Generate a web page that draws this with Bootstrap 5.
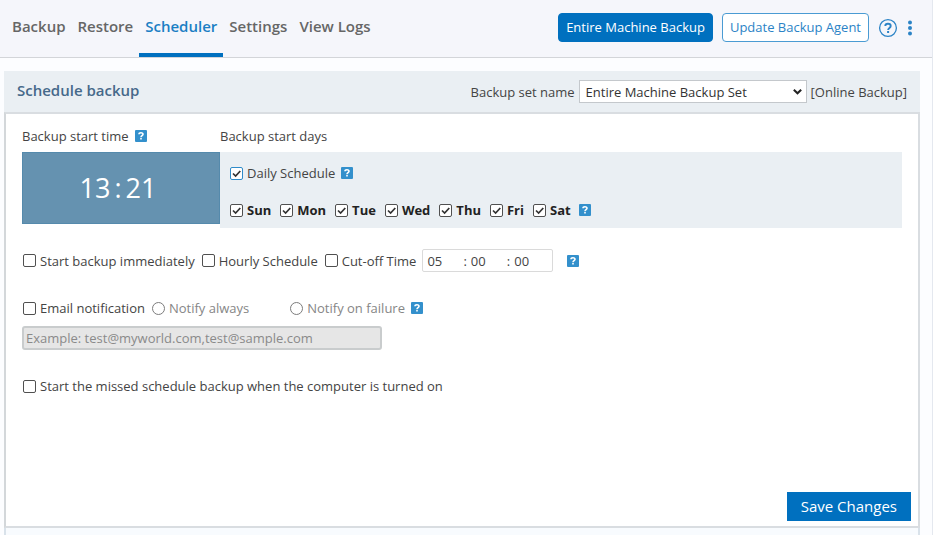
<!DOCTYPE html>
<html lang="en">
<head>
<meta charset="utf-8">
<meta name="viewport" content="width=device-width, initial-scale=1">
<title>Schedule backup</title>
<link href="https://cdn.jsdelivr.net/npm/bootstrap@5.3.0/dist/css/bootstrap.min.css" rel="stylesheet">
<style>
body{font-family:"Open Sans","Noto Sans",sans-serif;font-size:13px;line-height:20px;color:#444;background:#fcfdff}
.page{border-right:1px solid #e4e8ef}
.topbar{height:58px;background:#f5f6fb;border-bottom:1px solid #d3d5d9}
.tabs{margin-left:6px}
.tabs .nav-link{padding:16px 6px 0;height:57px;font-size:15px;font-weight:600;color:#666;border-bottom:4px solid transparent}
.tabs .nav-link.active{color:#1b7fc4;border-color:#0070bf}
.actions{gap:9px;padding:0 19px 2px 0}
.top-btn{height:29px;padding:0 7px;font-size:13px;line-height:27px;border-radius:4px}
.btn-blue{background:#0070bf;border-color:#0070bf;color:#fff}
.btn-line{background:#fff;border-color:#4a9bd3;color:#2b83c6}
.btn-line:hover,.btn-blue:hover{background:#005f9f;color:#fff}
.icon-btn{color:#2b83c6}
.panel{margin:13px 12px 0 4px}
.panel-head{height:41px;background:#eaeff3;padding:0 13px}
.panel-head h1{font-size:15px;line-height:20px;font-weight:600;color:#46698a}
.set-select{width:228px;height:23px;padding:0 20px 0 6px;font-size:13px;line-height:20px;border:1px solid #c4c8cc;border-radius:0;color:#333;background-position:right 3px center;background-size:11px 11px;
background-image:url("data:image/svg+xml,%3csvg xmlns='http://www.w3.org/2000/svg' viewBox='0 0 12 12'%3e%3cpath fill='none' stroke='%23222' stroke-width='2.2' d='M2 4l4 4 4-4'/%3e%3c/svg%3e")}
.panel-body{min-height:416px;background:#fff;border:2px solid #d9dde1;border-left-color:#d3d7da;padding:12px 7px 5px 16px}
.panel-foot{height:7px;margin:0 12px 0 4px;border:solid #d9e2ea;border-width:0 2px;background:#f8fbfe}
.start{margin-right:9px}
.caption{gap:6px;margin-bottom:6px}
.time-col{width:198px}
.clock{height:72px;background:#6592b0;border:1px solid #558aac;color:#fff;font-size:27px;line-height:34px;padding-right:6px}
.days{height:76px;background:#eaeff3;padding:11px 9px 0}
.daily{gap:6px}
.opt{display:flex;align-items:center;gap:4px}
.opt label{cursor:pointer}
.opt .form-check-input{width:13px;height:13px;margin:0 0 0 1px;border:1px solid #505050;border-radius:2px;background-color:#fff;background-size:13px 13px;flex:none}
.opt .form-check-input[type=radio]{border-radius:50%;border-color:#7c7c7c}
.opt .form-check-input:checked{background-image:url("data:image/svg+xml,%3csvg xmlns='http://www.w3.org/2000/svg' viewBox='0 0 13 13'%3e%3cpath fill='none' stroke='%23333' stroke-width='1.7' d='M3 6.5l2.6 2.6L10.3 4'/%3e%3c/svg%3e")}
.opt.lit .form-check-input{border-color:#2f8bc9}
.week{color:#222;font-weight:700;gap:8px;margin-top:17px}
.muted{color:#868686}
.help{width:12px;height:12px;padding:0;border:0;background:#3390cc;display:block;flex:none;border-radius:1px}
.help svg,.icon-btn svg{display:block}
.now-row{gap:6px;margin-top:21px}
.mail-row{gap:6px;margin-top:26px}
.always{margin-right:34px}
.cutoff{width:131px;height:23px;border:1px solid #dadada;border-radius:2px;padding:0 4px}
.cutoff input{width:36px;border:0;padding:0;background:none;color:#444;line-height:20px}
.mail{width:360px;max-width:100%;height:24px;padding:0 2px;font-size:13px;border:2px solid #c9cccd;border-radius:3px}
.mail:disabled{background:#e6e6e6}
.mail::placeholder{color:#8a8a8a}
.missed{margin-top:26px}
.save{height:29px;padding:0 13px;border-radius:0;font-size:15px;line-height:27px}
</style>
<script src="https://cdn.jsdelivr.net/npm/bootstrap@5.3.0/dist/js/bootstrap.bundle.min.js"></script>
</head>
<body>
<svg class="d-none" aria-hidden="true">
<symbol id="q" viewBox="0 0 12 12"><path fill="none" stroke="#fff" stroke-width="1.6" d="M4 4.3C4 2.2 8 2.2 8 4.2 8 5.6 6 5.5 6 7.2"/><path fill="#fff" d="M5.2 8.1h1.6v1.5H5.2z"/></symbol>
</svg>
<div class="page">
<header class="topbar d-flex justify-content-between">
  <nav class="nav tabs flex-nowrap" aria-label="Main">
    <a class="nav-link" href="#">Backup</a>
    <a class="nav-link" href="#">Restore</a>
    <a class="nav-link active" aria-current="page" href="#">Scheduler</a>
    <a class="nav-link" href="#">Settings</a>
    <a class="nav-link" href="#">View Logs</a>
  </nav>
  <div class="actions d-flex align-items-center">
    <button type="button" class="btn btn-blue top-btn">Entire Machine Backup</button>
    <button type="button" class="btn btn-line top-btn">Update Backup Agent</button>
    <button type="button" class="btn icon-btn border-0 p-0" aria-label="Help"><svg width="20" height="20" viewBox="0 0 20 20" fill="none" stroke="currentColor"><circle cx="10" cy="10" r="8.4" stroke-width="1.3"/><path stroke-width="1.9" d="M7.3 8C7.3 4.9 12.7 5 12.7 7.9c0 2-2.6 2-2.6 4.1"/><path stroke-width="2" d="M10.1 13v2"/></svg></button>
    <button type="button" class="btn icon-btn border-0 p-0" aria-label="More"><svg width="6" height="16" viewBox="0 0 6 16" fill="currentColor"><circle cx="3" cy="2.5" r="2"/><circle cx="3" cy="8" r="2"/><circle cx="3" cy="13.5" r="2"/></svg></button>
  </div>
</header>
<main>
<form class="panel">
  <div class="panel-head d-flex align-items-center justify-content-between">
    <h1 class="mb-0 pb-1">Schedule backup</h1>
    <div class="d-flex align-items-center gap-1">
      <label for="set">Backup set name</label>
      <select id="set" class="form-select set-select"><option>Entire Machine Backup Set</option></select>
      <span>[Online Backup]</span>
    </div>
  </div>
  <div class="panel-body d-flex flex-column">
    <div class="start d-flex">
      <div class="time-col flex-shrink-0">
        <div class="caption d-flex align-items-center"><span>Backup start time</span><button type="button" class="help" aria-label="Help on start time"><svg width="12" height="12"><use href="#q"/></svg></button></div>
        <div class="clock d-flex align-items-center justify-content-center gap-1"><span>13</span><span>:</span><span>21</span></div>
      </div>
      <div class="flex-grow-1">
        <div class="caption">Backup start days</div>
        <div class="days">
          <div class="daily d-flex align-items-center">
            <div class="opt lit"><input class="form-check-input" type="checkbox" id="daily" checked><label for="daily">Daily Schedule</label></div>
            <button type="button" class="help" aria-label="Help on daily schedule"><svg width="12" height="12"><use href="#q"/></svg></button>
          </div>
          <div class="week d-flex align-items-center">
            <div class="opt"><input class="form-check-input" type="checkbox" id="sun" checked><label for="sun">Sun</label></div>
            <div class="opt"><input class="form-check-input" type="checkbox" id="mon" checked><label for="mon">Mon</label></div>
            <div class="opt"><input class="form-check-input" type="checkbox" id="tue" checked><label for="tue">Tue</label></div>
            <div class="opt"><input class="form-check-input" type="checkbox" id="wed" checked><label for="wed">Wed</label></div>
            <div class="opt"><input class="form-check-input" type="checkbox" id="thu" checked><label for="thu">Thu</label></div>
            <div class="opt"><input class="form-check-input" type="checkbox" id="fri" checked><label for="fri">Fri</label></div>
            <div class="opt"><input class="form-check-input" type="checkbox" id="sat" checked><label for="sat">Sat</label></div>
            <button type="button" class="help" aria-label="Help on days"><svg width="12" height="12"><use href="#q"/></svg></button>
          </div>
        </div>
      </div>
    </div>
    <div class="now-row d-flex align-items-center">
      <div class="opt"><input class="form-check-input" type="checkbox" id="now"><label for="now">Start backup immediately</label></div>
      <div class="opt"><input class="form-check-input" type="checkbox" id="hourly"><label for="hourly">Hourly Schedule</label></div>
      <div class="opt"><input class="form-check-input" type="checkbox" id="cut"><label for="cut">Cut-off Time</label></div>
      <div class="cutoff d-flex align-items-center"><input type="text" aria-label="Hours" value="05"><span>:</span><input type="text" class="ms-1" aria-label="Minutes" value="00"><span>:</span><input type="text" class="ms-1" aria-label="Seconds" value="00"></div>
      <button type="button" class="help ms-2" aria-label="Help on cut-off time"><svg width="12" height="12"><use href="#q"/></svg></button>
    </div>
    <div class="mail-row d-flex align-items-center">
      <div class="opt"><input class="form-check-input" type="checkbox" id="email"><label for="email">Email notification</label></div>
      <div class="opt muted always"><input class="form-check-input" type="radio" name="notify" id="always"><label for="always">Notify always</label></div>
      <div class="opt muted"><input class="form-check-input" type="radio" name="notify" id="failure"><label for="failure">Notify on failure</label></div>
      <button type="button" class="help" aria-label="Help on notification"><svg width="12" height="12"><use href="#q"/></svg></button>
    </div>
    <input type="text" class="form-control mail mt-2" aria-label="Email addresses" placeholder="Example: test@myworld.com,test@sample.com" disabled>
    <div class="opt missed"><input class="form-check-input" type="checkbox" id="missed"><label for="missed">Start the missed schedule backup when the computer is turned on</label></div>
    <button type="submit" class="btn btn-blue save align-self-end mt-auto">Save Changes</button>
  </div>
</form>
<div class="panel-foot"></div>
</main>
</div>
</body>
</html>
